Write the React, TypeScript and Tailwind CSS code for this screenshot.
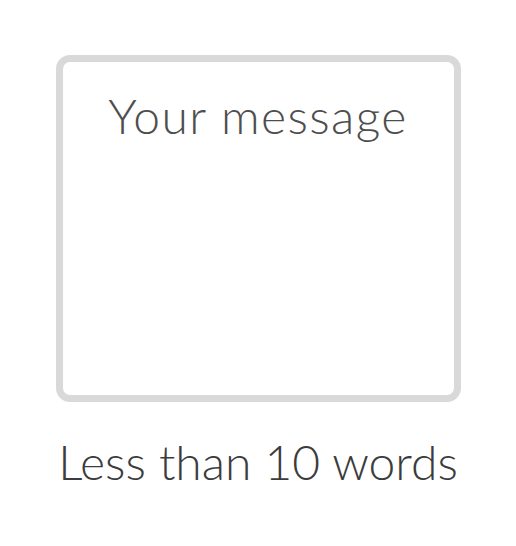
export default function App() {
  return (
    <div className="flex min-h-[546px] w-full flex-col items-center bg-white pt-[55px] font-['Lato',sans-serif]">
      <div className="flex h-[347px] w-[405px] justify-center rounded-[14px] border-[7px] border-[#d9d9d9] bg-white pt-[26px]">
        <span className="text-[48px] font-light leading-[56px] tracking-[1.4px] text-[#4e4e4e]">Your message</span>
      </div>
      <p className="mt-[32px] text-[48px] font-light leading-[56px] text-[#3c3c3c]">Less than 10 words</p>
    </div>
  );
}
